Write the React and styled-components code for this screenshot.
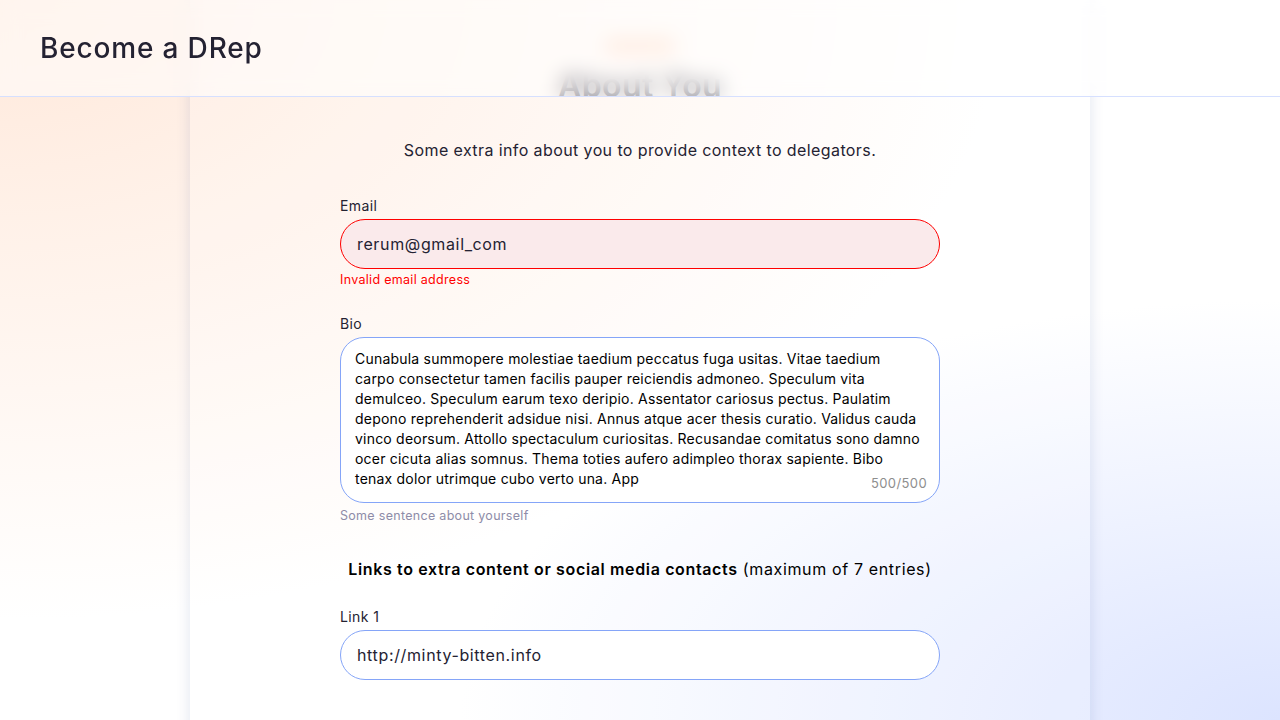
import React from 'react';
import styled, { createGlobalStyle } from 'styled-components';

const GlobalStyle = createGlobalStyle`
  html, body {
    margin: 0;
    padding: 0;
    height: 100%;
    overflow: hidden;
  }
  body {
    font-family: Inter, "Open Sans", sans-serif;
    letter-spacing: 0.025em;
    color: #242232;
    background:
      radial-gradient(ellipse 1000px 620px at 0% 0%, #ffe8da 0%, rgba(255, 236, 224, 0.7) 38%, rgba(255, 255, 255, 0) 100%),
      radial-gradient(ellipse 820px 420px at 100% 100%, #dce4ff 0%, rgba(221, 229, 255, 0.5) 50%, rgba(255, 255, 255, 0) 100%),
      #ffffff;
  }
`;

const Header = styled.header`
  position: fixed;
  top: 0;
  left: 0;
  right: 0;
  height: 96px;
  display: flex;
  align-items: center;
  padding: 0 40px;
  background: rgba(255, 255, 255, 0.55);
  backdrop-filter: blur(10px);
  border-bottom: 1px solid #d6e0ff;
  z-index: 10;
`;

const HeaderTitle = styled.h1`
  margin: 0;
  font-size: 28px;
  font-weight: 500;
  line-height: 40px;
  letter-spacing: 0.03em;
  color: #242232;
`;

const Card = styled.main`
  width: 900px;
  min-height: 820px;
  margin: 0 auto;
  box-sizing: border-box;
  padding: 38px 150px 60px;
  display: flex;
  flex-direction: column;
  background: rgba(255, 255, 255, 0.15);
  box-shadow: 0 0 14px rgba(20, 40, 120, 0.12);
`;

const StepPill = styled.div`
  align-self: center;
  width: 72px;
  height: 16px;
  border-radius: 8px;
  background: rgba(255, 176, 130, 0.45);
`;

const Title = styled.h2`
  margin: 10px 0 0;
  text-align: center;
  font-size: 32px;
  font-weight: 600;
  line-height: 44px;
  color: #242232;
`;

const Subtitle = styled.p`
  margin: 30px 0 0;
  text-align: center;
  font-size: 16px;
  line-height: 24px;
  color: #242232;
`;

const Field = styled.div`
  display: flex;
  flex-direction: column;
  margin-top: ${({ $top }) => $top}px;
`;

const Label = styled.label`
  font-size: 14px;
  line-height: 21px;
  color: #242232;
  margin-bottom: 3px;
`;

const TextInput = styled.input`
  box-sizing: border-box;
  height: 50px;
  width: 100%;
  padding: 0 16px;
  border-radius: 25px;
  border: 1px solid ${({ $error }) => ($error ? '#ff0000' : '#85a5f8')};
  background: ${({ $error }) => ($error ? '#faeaeb' : '#ffffff')};
  font-family: inherit;
  font-size: 16px;
  letter-spacing: 0.04em;
  color: #242232;
  caret-color: #242232;
  outline: none;
`;

const ErrorText = styled.span`
  margin-top: 2px;
  font-size: 12.5px;
  line-height: 18px;
  letter-spacing: 0.3px;
  color: #ff0000;
`;

const AreaWrap = styled.div`
  position: relative;
`;

const TextArea = styled.textarea`
  display: block;
  box-sizing: border-box;
  width: 100%;
  height: 166px;
  padding: 11px 14px 19px;
  border-radius: 24px;
  border: 1px solid #85a5f8;
  background: #ffffff;
  font-family: inherit;
  font-size: 14px;
  line-height: 20px;
  letter-spacing: 0.015em;
  color: #000000;
  resize: none;
  overflow: hidden;
  white-space: pre;
  outline: none;
`;

const Counter = styled.span`
  position: absolute;
  right: 13px;
  bottom: 12px;
  font-size: 13px;
  line-height: 16px;
  color: #8e8e8e;
`;

const HelperText = styled.span`
  margin-top: 4px;
  font-size: 12.5px;
  line-height: 18px;
  letter-spacing: 0.3px;
  color: #8e8ca8;
`;

const SectionHeading = styled.p`
  margin: 32px 0 0;
  text-align: center;
  font-size: 16px;
  line-height: 24px;
  letter-spacing: 0.04em;
  color: #000000;

  strong {
    font-weight: 600;
  }
`;

const bio = [
  'Cunabula summopere molestiae taedium peccatus fuga usitas. Vitae taedium',
  'carpo consectetur tamen facilis pauper reiciendis admoneo. Speculum vita',
  'demulceo. Speculum earum texo deripio. Assentator cariosus pectus. Paulatim',
  'depono reprehenderit adsidue nisi. Annus atque acer thesis curatio. Validus cauda',
  'vinco deorsum. Attollo spectaculum curiositas. Recusandae comitatus sono damno',
  'ocer cicuta alias somnus. Thema toties aufero adimpleo thorax sapiente. Bibo',
  'tenax dolor utrimque cubo verto una. App',
].join('\n');

export default function App() {
  return (
    <>
      <GlobalStyle />
      <Header>
        <HeaderTitle>Become a DRep</HeaderTitle>
      </Header>
      <Card>
        <StepPill />
        <Title>About You</Title>
        <Subtitle>Some extra info about you to provide context to delegators.</Subtitle>

        <Field $top={33}>
          <Label>Email</Label>
          <TextInput $error defaultValue="rerum@gmail_com" />
          <ErrorText>Invalid email address</ErrorText>
        </Field>

        <Field $top={24}>
          <Label>Bio</Label>
          <AreaWrap>
            <TextArea wrap="off" defaultValue={bio} />
            <Counter>500/500</Counter>
          </AreaWrap>
          <HelperText>Some sentence about yourself</HelperText>
        </Field>

        <SectionHeading>
          <strong>Links to extra content or social media contacts</strong> (maximum of 7 entries)
        </SectionHeading>

        <Field $top={25}>
          <Label>Link 1</Label>
          <TextInput defaultValue="http://minty-bitten.info" autoFocus />
        </Field>
      </Card>
    </>
  );
}
